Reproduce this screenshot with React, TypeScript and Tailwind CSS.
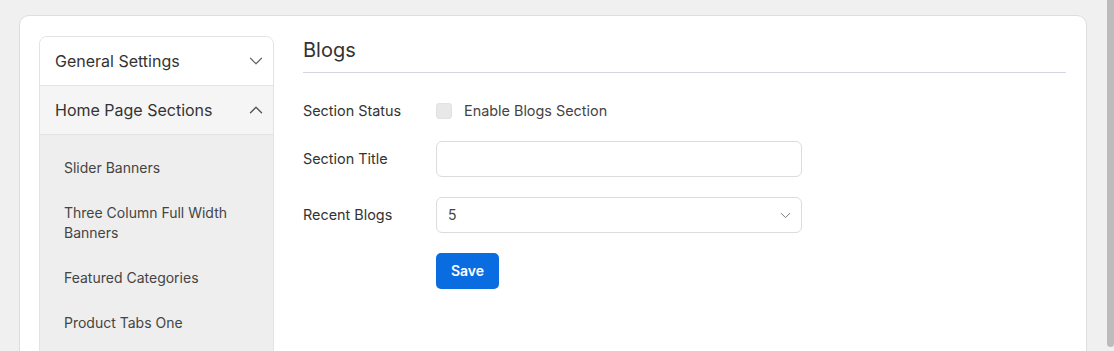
import { ChevronDown, ChevronUp } from "lucide-react";

const subItems = [
  "Slider Banners",
  "Three Column Full Width Banners",
  "Featured Categories",
  "Product Tabs One",
];

function Sidebar() {
  return (
    <aside className="w-[235px] shrink-0 rounded-lg border border-[#e3e3e3] overflow-hidden self-start">
      <div className="h-[48px] flex items-center justify-between pl-[15px] pr-[6px] bg-white">
        <span className="text-base text-[#333]">General Settings</span>
        <ChevronDown size={22} strokeWidth={1.3} className="text-[#666]" />
      </div>
      <div className="h-[50px] flex items-center justify-between pl-[15px] pr-[6px] bg-[#f5f5f5] border-y border-[#e3e3e3]">
        <span className="text-base text-[#333]">Home Page Sections</span>
        <ChevronUp size={22} strokeWidth={1.5} className="text-[#555]" />
      </div>
      <ul className="bg-[#eeeeee] pt-[23px] pl-6 pr-4 flex flex-col gap-[25px] pb-6">
        {subItems.map((item) => (
          <li key={item} className="text-sm leading-5 text-[#444]">
            {item}
          </li>
        ))}
      </ul>
    </aside>
  );
}

function Row({ label, children }: { label: string; children: React.ReactNode }) {
  return (
    <div className="flex items-center h-full">
      <span className="w-[133px] shrink-0 text-[14.4px] text-[#333]">{label}</span>
      {children}
    </div>
  );
}

function BlogsForm() {
  return (
    <section className="flex-1">
      <h2 className="text-xl leading-7 text-[#333] pb-2 border-b border-[#d5d7e0]">Blogs</h2>
      <div className="flex flex-col">
        <div className="mt-[27px] h-[21px]">
          <Row label="Section Status">
            <span className="w-4 h-4 rounded-[3px] bg-[#e8e8e8] border border-[#e2e2e2]" />
            <span className="ml-3 text-[14.4px] text-[#444]">Enable Blogs Section</span>
          </Row>
        </div>
        <div className="mt-[20px]">
          <Row label="Section Title">
            <div className="w-[366px] h-[36px] rounded-md border border-[#dcdcdc] bg-white" />
          </Row>
        </div>
        <div className="mt-5">
          <Row label="Recent Blogs">
            <div className="w-[366px] h-[36px] rounded-md border border-[#dcdcdc] bg-white flex items-center justify-between pl-[11px] pr-[7px]">
              <span className="text-sm text-[#444]">5</span>
              <ChevronDown size={17} strokeWidth={1.4} className="text-[#777]" />
            </div>
          </Row>
        </div>
        <div className="mt-5 pl-[133px]">
          <button className="w-[63px] h-[36px] rounded-[5px] bg-[#0a6ce1] text-white text-sm font-semibold">
            Save
          </button>
        </div>
      </div>
    </section>
  );
}

export default function App() {
  return (
    <div className="h-[351px] overflow-hidden bg-[#f0f0f0] flex font-['Inter',sans-serif]">
      <div className="flex-1 pl-[19px] pr-[20px] pt-[15px]">
        <div className="h-[400px] bg-white rounded-[10px] border border-[#dedede] pl-[19px] pr-5 py-5 flex gap-[29px]">
          <Sidebar />
          <BlogsForm />
        </div>
      </div>
      <div className="w-[7px] shrink-0">
        <div className="h-[347px] bg-[#bcbcbc] rounded-b-sm" />
      </div>
    </div>
  );
}
